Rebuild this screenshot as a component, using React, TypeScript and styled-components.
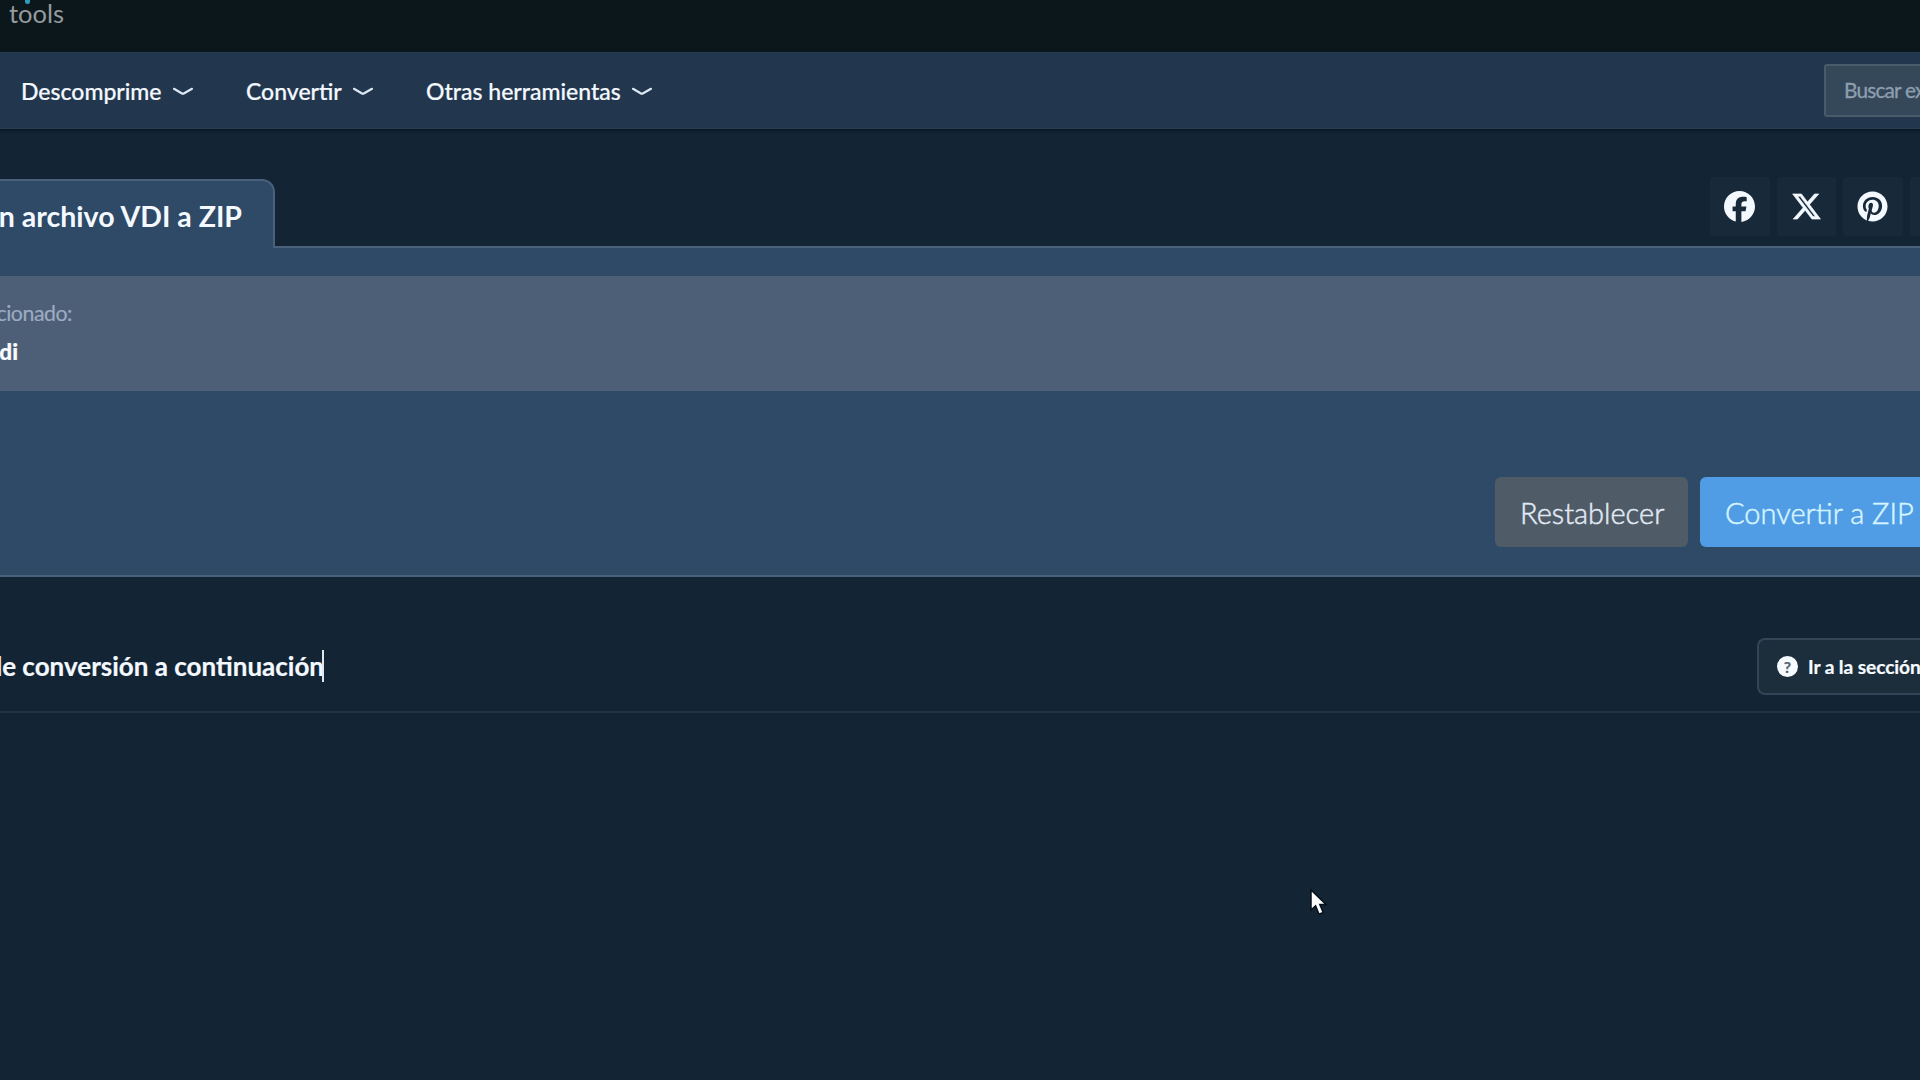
import React from "react";
import styled, { createGlobalStyle } from "styled-components";
import { FaFacebook, FaXTwitter, FaPinterest } from "react-icons/fa6";

const GlobalStyle = createGlobalStyle`
  *, *::before, *::after { box-sizing: border-box; }
  html, body { margin: 0; background: #132534; overflow: hidden; }
  body { font-family: Lato, Carlito, "Open Sans", sans-serif; color: #f4f9ff; }
  button, input { font-family: inherit; margin: 0; }
`;

const Page = styled.div`
  width: 1920px;
  height: 1080px;
  overflow: hidden;
  display: flex;
  flex-direction: column;
  background: #132534;
`;

const Header = styled.header`
  flex: none;
  height: 52px;
  padding-left: 9px;
  background: #0c171b;
  border-bottom: 1px solid #081923;
`;

const Brand = styled.div`
  position: relative;
  width: 60px;
  color: #959b9d;
  font-size: 25.5px;
  line-height: 26px;
  white-space: nowrap;
`;

const BrandDot = styled.span`
  position: absolute;
  left: 16px;
  top: -2px;
  width: 5px;
  height: 6px;
  border-radius: 3px;
  background: #2c9dbd;
`;

const Nav = styled.nav`
  flex: none;
  height: 77px;
  display: flex;
  justify-content: space-between;
  align-items: center;
  padding-left: 21px;
  background: #22364d;
  border-top: 1px solid #263b50;
  border-bottom: 1px solid #2a3e50;
  box-shadow: 0 1px 3px 1px #081722;
`;

const Menu = styled.div`
  display: flex;
  padding-top: 2px;
`;

const MenuItem = styled.div<{ $width: number; $label: number }>`
  width: ${(p) => p.$width}px;
  display: grid;
  grid-template-columns: ${(p) => p.$label}px 20px;
  column-gap: 11px;
  align-items: center;
  font-size: 23px;
  line-height: 29px;
  font-weight: 500;
  white-space: nowrap;
  -webkit-text-stroke: 0.2px;
`;

const Search = styled.div`
  width: 96px;
  height: 53px;
  padding-left: 18px;
  border: 2px solid #475b6b;
  border-right: 0;
  border-radius: 3px 0 0 3px;
  background: #344859;
  color: #8e9eb0;
  font-size: 20.8px;
  letter-spacing: -0.8px;
  line-height: 48px;
  white-space: nowrap;
  overflow: hidden;
  -webkit-text-stroke: 0.3px;
`;

const TabRow = styled.div`
  flex: none;
  height: 117px;
  display: flex;
  justify-content: space-between;
  align-items: flex-end;
`;

const Tab = styled.h1`
  width: 275px;
  height: 69px;
  margin: 0 0 -2px;
  padding-right: 31px;
  display: flex;
  justify-content: flex-end;
  border: 2px solid #49617b;
  border-left: 0;
  border-bottom: 0;
  border-radius: 0 13px 0 0;
  background: #2e4a67;
  font-size: 28.5px;
  line-height: 71px;
  font-weight: 700;
  white-space: nowrap;
  position: relative;
`;

const Socials = styled.div`
  width: 210px;
  height: 69px;
  display: flex;
  gap: 7px;
  overflow: hidden;
`;

const Social = styled.div`
  flex: none;
  width: 59.5px;
  height: 59px;
  display: flex;
  align-items: center;
  justify-content: center;
  background: #182a3a;
  border-radius: 4px;
  font-size: 31px;
`;

const XIcon = styled(FaXTwitter)`
  path { stroke: #f4f9ff; stroke-width: 10; }
`;

const Panel = styled.section`
  flex: none;
  height: 331px;
  padding-top: 28px;
  border-top: 2px solid #49617b;
  border-bottom: 2px solid #49617b;
  background: #2e4a67;
`;

const FileBox = styled.div`
  height: 115px;
  padding-top: 20px;
  background: #4d5f76;
`;

const FileText = styled.div<{ $width: number; $strong?: boolean }>`
  width: ${(p) => p.$width}px;
  height: 39px;
  display: flex;
  justify-content: flex-end;
  font-size: ${(p) => (p.$strong ? 22.5 : 21.3)}px;
  letter-spacing: ${(p) => (p.$strong ? 0 : -0.45)}px;
  line-height: 34px;
  font-weight: ${(p) => (p.$strong ? 900 : 400)};
  color: ${(p) => (p.$strong ? "#f8fcff" : "#9cabc3")};
  white-space: nowrap;
  -webkit-text-stroke: 0.2px;
`;

const Actions = styled.div`
  width: 100%;
  display: flex;
  gap: 12px;
  padding: 86px 0 0 1495px;
  overflow: hidden;
`;

const ActionButton = styled.button<{ $primary?: boolean }>`
  flex: none;
  width: ${(p) => (p.$primary ? 240 : 193)}px;
  height: 70px;
  padding: 0 0 0 25px;
  border: 0;
  border-radius: 6px;
  text-align: left;
  background: ${(p) => (p.$primary ? "#509de6" : "#505b68")};
  color: ${(p) => (p.$primary ? "#d6f4ff" : "#e1eaf3")};
  font-size: 29px;
  font-weight: 300;
  white-space: nowrap;
  -webkit-text-stroke: 0.5px;
`;

const Conversion = styled.section`
  flex: none;
  height: 136px;
  display: flex;
  align-items: flex-start;
  justify-content: space-between;
  padding-top: 61px;
  border-bottom: 2px solid #203242;
`;

const ConversionTitle = styled.h2`
  width: 324px;
  height: 56px;
  margin: 0;
  display: flex;
  align-items: center;
  justify-content: flex-end;
  font-size: 26px;
  line-height: 36px;
  font-weight: 700;
  white-space: nowrap;
  -webkit-text-stroke: 0.2px;
`;

const Caret = styled.span`
  flex: none;
  width: 2px;
  height: 32px;
  margin-left: -2px;
  background: #dce7ee;
`;

const HelpButton = styled.button`
  width: 163px;
  height: 57px;
  padding: 0 0 0 18px;
  display: flex;
  align-items: center;
  gap: 10px;
  border: 2px solid #334556;
  border-right: 0;
  border-radius: 8px 0 0 8px;
  background: #1c2d3c;
  color: #f6fbff;
  font-size: 19.2px;
  letter-spacing: -0.1px;
  font-weight: 700;
  white-space: nowrap;
  overflow: hidden;
  -webkit-text-stroke: 0.2px;
`;

const QuestionBadge = styled.span`
  flex: none;
  width: 21px;
  height: 21px;
  border-radius: 50%;
  background: #f6fbff;
  color: #56616b;
  font-size: 16px;
  line-height: 21px;
  text-align: center;
  letter-spacing: 0;
`;

const Pointer = styled.svg`
  position: absolute;
  left: 1308px;
  top: 887px;
  overflow: visible;
`;

const Chevron = () => (
  <svg width="20" height="10" viewBox="0 0 20 10" fill="none">
    <path d="M1 1.8 8.6 6.3q1.3.8 2.6 0L19 1.8" stroke="#dce8f4" strokeWidth="2.2" strokeLinecap="round" />
  </svg>
);

const menu = [
  { label: "Descomprime", text: 141, width: 225 },
  { label: "Convertir", text: 96, width: 180 },
  { label: "Otras herramientas", text: 195, width: 240 },
];

export default function App() {
  return (
    <>
      <GlobalStyle />
      <Page>
        <Header>
          <Brand>tools<BrandDot /></Brand>
        </Header>
        <Nav>
          <Menu>
            {menu.map((item) => (
              <MenuItem key={item.label} $width={item.width} $label={item.text}>
                <span>{item.label}</span>
                <Chevron />
              </MenuItem>
            ))}
          </Menu>
          <Search>Buscar ex</Search>
        </Nav>
        <TabRow>
          <Tab>n archivo VDI a ZIP</Tab>
          <Socials>
            <Social><FaFacebook /></Social>
            <Social><XIcon /></Social>
            <Social><FaPinterest /></Social>
            <Social />
          </Socials>
        </TabRow>
        <Panel>
          <FileBox>
            <FileText $width={72}>cionado:</FileText>
            <FileText $width={18} $strong>di</FileText>
          </FileBox>
          <Actions>
            <ActionButton>Restablecer</ActionButton>
            <ActionButton $primary>Convertir a ZIP</ActionButton>
          </Actions>
        </Panel>
        <Conversion>
          <ConversionTitle>de conversión a continuación<Caret /></ConversionTitle>
          <HelpButton>
            <QuestionBadge>?</QuestionBadge>
            <span>Ir a la sección</span>
          </HelpButton>
        </Conversion>
      </Page>
      <Pointer width="20" height="30" viewBox="0 0 20 30">
        <path d="M3 3V23L7.6 18.8 11 27.3 15.2 25.5 11.8 17.4H18Z" fill="#fff" stroke="#07111b" strokeWidth="1.5" />
      </Pointer>
    </>
  );
}
